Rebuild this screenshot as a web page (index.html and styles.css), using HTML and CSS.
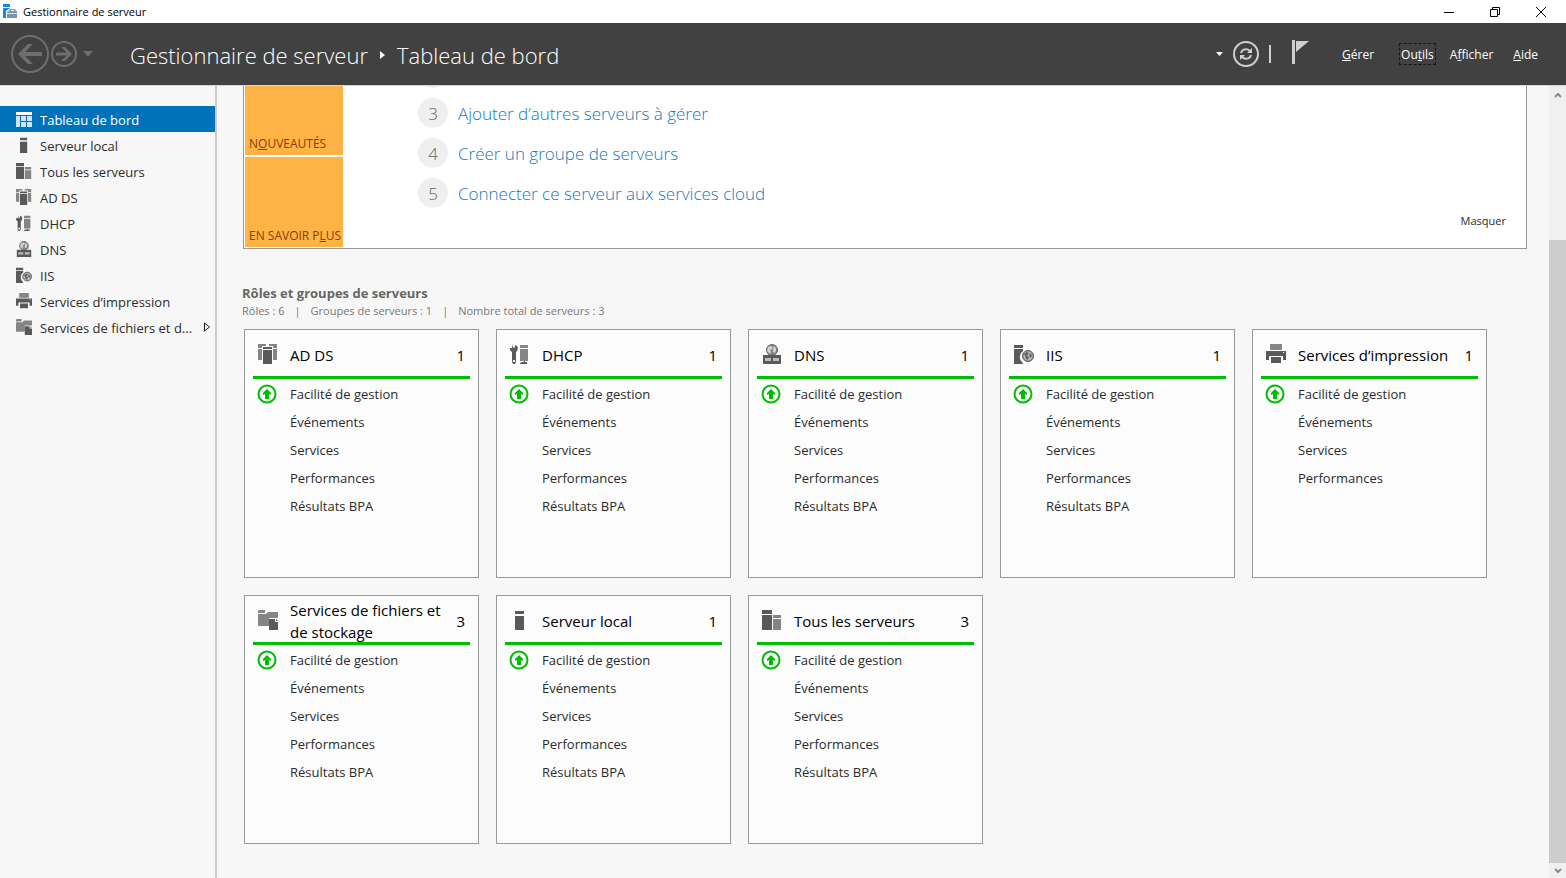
FILE: index.html
```html
<!DOCTYPE html>
<html lang="fr">
<head>
<meta charset="utf-8">
<title>Gestionnaire de serveur</title>
<link rel="stylesheet" href="styles.css">
</head>
<body>
<svg class="sprite" aria-hidden="true">
  <symbol id="i-dash" viewBox="0 0 16 16"><path fill="#fff" d="M0 1h16v3H0z"/><path fill="#cfe5f5" d="M0 5h4v11H0zM5 5h5v5H5zM11 5h5v5h-5zM5 11h5v5H5zM11 11h5v5h-5z"/></symbol>
  <symbol id="i-local" viewBox="0 0 20 20"><path fill="#595959" d="M5 1h9v3H5zM5 6h9v14H5z"/></symbol>
  <symbol id="i-all" viewBox="0 0 20 20"><path fill="#595959" d="M0 0h10v4H0zM0 5h10v15H0z"/><path fill="#858585" d="M11 5h8v3h-8zM11 9h8v11h-8z"/></symbol>
  <symbol id="i-adds" viewBox="0 0 20 20"><path fill="#858585" d="M0 0h8v2H4v2H0zM11 0h8v4h-4V2h-4zM0 5h4v11H0zM15 5h4v11h-4z"/><path fill="#595959" d="M5 3h9v2H5zM5 6h9v14H5z"/></symbol>
  <symbol id="i-dhcp" viewBox="0 0 20 20"><path fill="#595959" d="M3 0v3l1 1 1-1V1l2 1 1 2-1 3-1 1v10l-1 2H3l-1-2V8L0 6V4h2zM12 18h2v-1h1v1h2v2h-7v-1z"/><path fill="#858585" d="M10 1h8v3h-8zM10 5h8v12h-8z"/><path fill="#fcfcfc" d="M3 16h2v2H3z"/></symbol>
  <symbol id="i-dns" viewBox="0 0 20 20"><circle cx="10" cy="6" r="5.500" fill="#858585" stroke="#666"/><path fill="#d2d2d2" d="M6 3l3-1 2 1-1 2-2 1 1 2-1 2-3-3zM12 2l2 2v2l-1 3-2-1V5z"/><path fill="#595959" d="M1 11h18v9H1z"/><path fill="#bdbdbd" d="M3 14h6v3H3zM11 14h6v3h-6z"/></symbol>
  <symbol id="i-iis" viewBox="0 0 20 20"><path fill="#595959" d="M0 1h9v3H0zM0 5h9v2a7 7 0 0 0-1 11l1 2H0z"/><circle cx="14" cy="12" r="5.500" fill="#858585" stroke="#595959"/><circle cx="14" cy="12" r="4.500" fill="#bdbdbd"/><path fill="#666" d="M10 10l3-2 2 1-2 3 2 1-1 3-2-1-1-3zM16 9l2 2-1 3-2-2z"/></symbol>
  <symbol id="i-print" viewBox="0 0 20 20"><path fill="#858585" d="M4 0h12v6H4z"/><path fill="#595959" d="M0 7h20v9h-3v-4H3v4H0zM5 13h10v6H5z"/><path fill="#fff" d="M17 8h1v1h-1z"/></symbol>
  <symbol id="i-files" viewBox="0 0 20 20"><path fill="#858585" d="M0 1l1-1h6v3H0zM0 4h8l2-2h10v6h-9v8H0z"/><path fill="#595959" d="M11 9h6v3h3v8h-9zM18 9l2 2h-2z"/></symbol>
  <symbol id="i-up" viewBox="0 0 20 20"><circle cx="10" cy="10" r="8.500" fill="none" stroke="#00bc00" stroke-width="2"/><path fill="#00bc00" d="M10 5l4 4v2l-2-1v5H8v-5l-2 1V9z"/></symbol>
</svg>
<div class="window">
  <div class="titlebar">
    <svg class="app-icon" viewBox="0 0 16 16"><path fill="#1e88d8" d="M1 0h7v3H1zM1 4h7L4 7v7H1z"/><path fill="#7896ad" d="M7 7l1-2h5l1 2h1v7H5V8zm2 0h3V6H9z"/><path fill="#dce7ef" d="M5 9h10v1H5z"/></svg>
    <span class="window-name">Gestionnaire de serveur</span>
    <div class="window-buttons">
      <button aria-label="Réduire"><svg viewBox="0 0 12 12"><path d="M1 6.500h10"/></svg></button>
      <button aria-label="Restaurer"><svg viewBox="0 0 12 12"><path d="M1.500 3.500h7v7h-7zM3.500 3.500v-2h7v7h-2"/></svg></button>
      <button aria-label="Fermer"><svg viewBox="0 0 12 12"><path d="M1 1l10 10M11 1L1 11"/></svg></button>
    </div>
  </div>
  <header class="header">
    <div class="history">
      <button aria-label="Précédent"><svg width="38" height="38" viewBox="0 0 38 38"><circle cx="19" cy="19" r="18" fill="none" stroke="#6e6e6e" stroke-width="2"/><path fill="#6e6e6e" d="M7 19L17 9h5l-8 8h17v4H14l8 8h-5z"/></svg></button>
      <button aria-label="Suivant"><svg width="26" height="26" viewBox="0 0 26 26"><circle cx="13" cy="13" r="12" fill="none" stroke="#6e6e6e" stroke-width="2"/><path fill="#6e6e6e" d="M21 13l-7 7h-4l6-5.500H5v-3h11L10 6h4z"/></svg></button>
      <button class="history-menu" aria-label="Historique"><svg width="10" height="6" viewBox="0 0 10 6"><path fill="#6e6e6e" d="M0 0h10L5 6z"/></svg></button>
    </div>
    <h1 class="crumbs"><span>Gestionnaire de serveur</span><svg width="5" height="8" viewBox="0 0 5 8"><path fill="#fff" d="M0 0l5 4-5 4z"/></svg><span>Tableau de bord</span></h1>
    <div class="tools">
      <button aria-label="Options"><svg width="7" height="4" viewBox="0 0 7 4"><path fill="#fff" d="M0 0h7L3.500 4z"/></svg></button>
      <button class="refresh" aria-label="Actualiser"><svg width="26" height="26" viewBox="0 0 26 26" fill="none" stroke="#cfcfcf"><circle cx="13" cy="13" r="12" stroke-width="2"/><path stroke-width="2" d="M8 12c1-4 6-5 9-2M18 14c-1 4-6 5-9 2"/><path fill="#cfcfcf" stroke="none" d="M19 7v5h-5zM7 19v-5h5z"/></svg></button>
      <span class="divider"></span>
      <button class="flag" aria-label="Notifications"><svg width="18" height="24" viewBox="0 0 18 24"><path fill="#cfcfcf" d="M0 0h3v24H0zM4 1h13L4 12z"/></svg></button>
    </div>
    <nav class="menu">
      <button class="gerer"><u>G</u>érer</button>
      <button class="focused">Ou<u>t</u>ils</button>
      <button>A<u>f</u>ficher</button>
      <button class="aide"><u>A</u>ide</button>
    </nav>
  </header>
  <div class="body">
    <nav class="sidebar">
      <a href="#" class="active"><svg><use href="#i-dash"/></svg>Tableau de bord</a>
      <a href="#"><svg><use href="#i-local"/></svg>Serveur local</a>
      <a href="#"><svg><use href="#i-all"/></svg>Tous les serveurs</a>
      <a href="#"><svg><use href="#i-adds"/></svg>AD DS</a>
      <a href="#"><svg><use href="#i-dhcp"/></svg>DHCP</a>
      <a href="#"><svg><use href="#i-dns"/></svg>DNS</a>
      <a href="#"><svg><use href="#i-iis"/></svg>IIS</a>
      <a href="#"><svg><use href="#i-print"/></svg>Services d’impression</a>
      <a href="#"><svg><use href="#i-files"/></svg>Services de fichiers et d...<svg class="expand" viewBox="0 0 7 10"><path fill="none" stroke="#222" d="M.5 1v8l5-4z"/></svg></a>
    </nav>
    <main class="main">
      <section class="welcome">
        <div class="tabs">
          <button>N<u>O</u>UVEAUTÉS</button>
          <button>EN SAVOIR P<u>L</u>US</button>
        </div>
        <div class="steps">
          <div class="step"><span class="num"></span></div>
          <div class="step"><span class="num">3</span><a href="#">Ajouter d’autres serveurs à gérer</a></div>
          <div class="step"><span class="num">4</span><a href="#">Créer un groupe de serveurs</a></div>
          <div class="step"><span class="num">5</span><a href="#">Connecter ce serveur aux services cloud</a></div>
        </div>
        <button class="hide">Masquer</button>
      </section>
      <h2 class="roles-title">Rôles et groupes de serveurs</h2>
      <p class="roles-info"><span>Rôles : 6</span><span>|</span><span>Groupes de serveurs : 1</span><span>|</span><span>Nombre total de serveurs : 3</span></p>
      <div class="cards">
        <article class="card"><h3><svg><use href="#i-adds"/></svg><span class="name">AD DS</span><span class="count">1</span></h3>
          <ul><li><svg><use href="#i-up"/></svg><a href="#">Facilité de gestion</a></li><li><a href="#">Événements</a></li><li><a href="#">Services</a></li><li><a href="#">Performances</a></li><li><a href="#">Résultats BPA</a></li></ul></article>
        <article class="card"><h3><svg><use href="#i-dhcp"/></svg><span class="name">DHCP</span><span class="count">1</span></h3>
          <ul><li><svg><use href="#i-up"/></svg><a href="#">Facilité de gestion</a></li><li><a href="#">Événements</a></li><li><a href="#">Services</a></li><li><a href="#">Performances</a></li><li><a href="#">Résultats BPA</a></li></ul></article>
        <article class="card"><h3><svg><use href="#i-dns"/></svg><span class="name">DNS</span><span class="count">1</span></h3>
          <ul><li><svg><use href="#i-up"/></svg><a href="#">Facilité de gestion</a></li><li><a href="#">Événements</a></li><li><a href="#">Services</a></li><li><a href="#">Performances</a></li><li><a href="#">Résultats BPA</a></li></ul></article>
        <article class="card"><h3><svg><use href="#i-iis"/></svg><span class="name">IIS</span><span class="count">1</span></h3>
          <ul><li><svg><use href="#i-up"/></svg><a href="#">Facilité de gestion</a></li><li><a href="#">Événements</a></li><li><a href="#">Services</a></li><li><a href="#">Performances</a></li><li><a href="#">Résultats BPA</a></li></ul></article>
        <article class="card"><h3><svg><use href="#i-print"/></svg><span class="name">Services d’impression</span><span class="count">1</span></h3>
          <ul><li><svg><use href="#i-up"/></svg><a href="#">Facilité de gestion</a></li><li><a href="#">Événements</a></li><li><a href="#">Services</a></li><li><a href="#">Performances</a></li></ul></article>
        <article class="card"><h3><svg><use href="#i-files"/></svg><span class="name">Services de fichiers et de stockage</span><span class="count">3</span></h3>
          <ul><li><svg><use href="#i-up"/></svg><a href="#">Facilité de gestion</a></li><li><a href="#">Événements</a></li><li><a href="#">Services</a></li><li><a href="#">Performances</a></li><li><a href="#">Résultats BPA</a></li></ul></article>
        <article class="card"><h3><svg><use href="#i-local"/></svg><span class="name">Serveur local</span><span class="count">1</span></h3>
          <ul><li><svg><use href="#i-up"/></svg><a href="#">Facilité de gestion</a></li><li><a href="#">Événements</a></li><li><a href="#">Services</a></li><li><a href="#">Performances</a></li><li><a href="#">Résultats BPA</a></li></ul></article>
        <article class="card"><h3><svg><use href="#i-all"/></svg><span class="name">Tous les serveurs</span><span class="count">3</span></h3>
          <ul><li><svg><use href="#i-up"/></svg><a href="#">Facilité de gestion</a></li><li><a href="#">Événements</a></li><li><a href="#">Services</a></li><li><a href="#">Performances</a></li><li><a href="#">Résultats BPA</a></li></ul></article>
      </div>
    </main>
    <div class="scrollbar">
      <button aria-label="Défiler vers le haut"><svg width="8" height="6" viewBox="0 0 8 6"><path d="M1 5l3-3 3 3"/></svg></button>
      <div class="track"><div class="thumb"></div></div>
      <button class="down" aria-label="Défiler vers le bas"><svg width="8" height="6" viewBox="0 0 8 6"><path d="M1 1l3 3 3-3"/></svg></button>
    </div>
  </div>
</div>
</body>
</html>
```
FILE: styles.css
```css
* { box-sizing: border-box; }
body { margin: 0; font-family: "Open Sans", "Noto Sans", sans-serif; font-size: 13px; color: #2b2b2b; }
button { margin: 0; padding: 0; border: 0; background: none; font: inherit; color: inherit; display: flex; align-items: center; justify-content: center; }
button, a { white-space: pre; }
a { color: inherit; text-decoration: none; }
h1, h2, h3, p, ul { margin: 0; padding: 0; font-weight: 400; }
svg { flex: none; }
.sprite { position: absolute; width: 0; height: 0; }
.window { display: flex; flex-direction: column; height: 100vh; overflow: hidden; }

.titlebar { display: flex; align-items: center; flex: none; height: 23px; background: #fff; color: #000; padding-left: 2px; }
.app-icon { width: 16px; height: 16px; }
.window-name { font-size: 11px; margin-left: 5px; }
.window-buttons { display: flex; margin-left: auto; height: 21px; padding-right: 2px; }
.window-buttons button { width: 46px; }
.window-buttons svg { width: 12px; height: 12px; fill: none; stroke: #000; }

.header { display: flex; align-items: center; flex: none; height: 62px; background: #414141; color: #fff; padding: 0 28px 0 11px; }
.history { display: flex; align-items: center; gap: 2px; }
.history-menu { margin-left: 4px; }
.crumbs { display: flex; align-items: center; gap: 12px; margin-left: 37px; font-size: 22px; font-weight: 300; white-space: nowrap; padding-top: 2px; }
.tools { display: flex; align-items: center; margin-left: auto; gap: 10px; }
.divider { width: 2px; height: 18px; background: #cfcfcf; }
.flag { margin-left: 11px; padding-bottom: 4px; }
.menu { display: flex; align-items: center; font-size: 12px; padding-left: 32px; }
.menu button { height: 20px; }
.gerer { margin-right: 26px; }
.focused { outline: 1px dashed #161616; padding: 0 1px; margin-right: 15px; }
.aide { margin-left: 20px; }

.body { display: flex; flex: 1; min-height: 0; background: #f7f7f7; border-top: 1px solid #d5d5d5; }
.sidebar { flex: none; width: 217px; padding-top: 20px; border-right: 2px solid #cbcbcb; }
.sidebar a { display: flex; align-items: center; height: 26px; padding-left: 16px; padding-top: 2px; }
.sidebar svg { width: 16px; height: 16px; margin: 0 8px 3px 0; }
.sidebar .active { background: #0072bc; color: #fff; }
.sidebar .expand { width: 7px; height: 10px; margin: 0 4px 2px auto; }

.main { flex: 1; min-width: 0; overflow: hidden; padding: 0 22px 0 26px; }
.welcome { display: flex; height: 163px; background: #fff; border: 1px solid #999; border-top: 0; overflow: hidden; }
.tabs { display: flex; flex-direction: column; justify-content: flex-end; gap: 2px; flex: none; width: 100px; padding: 0 1px 1px; }
.tabs button { height: 90px; align-items: flex-end; justify-content: flex-start; padding: 0 4px 3px; background: #ffb344; color: #85400a; font-size: 12px; flex: none; }
.steps { display: flex; flex-direction: column; justify-content: flex-end; flex: 1; padding: 0 0 35px 74px; }
.step { display: flex; align-items: center; flex: none; height: 40px; gap: 10px; font-size: 17px; font-weight: 300; color: #1677bf; }
.num { display: flex; align-items: center; justify-content: center; width: 30px; height: 30px; border-radius: 50%; background: #efefef; color: #666; }
.hide { align-self: flex-end; font-size: 11px; padding: 0 20px 20px 0; }

.roles-title { font-size: 13px; line-height: 18px; font-weight: 700; color: #666; padding-top: 35px; }
.roles-info { display: flex; gap: 10px; font-size: 11px; line-height: 17px; color: #777; margin-bottom: 10px; }
.roles-title, .roles-info { margin-left: -1px; }
.cards { display: grid; grid-template-columns: repeat(auto-fill, 235px); gap: 17px; padding-left: 1px; }
.card { height: 249px; background: #fcfcfc; border: 1px solid #999; padding: 0 8px; }
.card h3 { display: flex; align-items: center; height: 49px; border-bottom: 3px solid #00bf00; font-size: 15px; line-height: 22px; color: #000; padding: 4px 5px 0 5px; }
.card h3 svg { width: 20px; height: 20px; margin-bottom: 2px; }
.card h3 .name { flex: 1; margin-left: 12px; }
.card ul { list-style: none; padding-top: 1px; }
.card li { display: flex; align-items: center; height: 28px; padding-left: 37px; }
.card li svg { width: 20px; height: 20px; margin: 0 13px 0 -33px; }

.scrollbar { display: flex; flex-direction: column; flex: none; width: 17px; background: #f0f0f0; }
.scrollbar button { height: 17px; }
.scrollbar .down { height: 15px; }
.scrollbar svg { fill: none; stroke: #8a8a8a; stroke-width: 2; }
.track { display: flex; flex: 1; flex-direction: column; justify-content: flex-end; }
.thumb { height: 82%; background: #cdcdcd; }
```
